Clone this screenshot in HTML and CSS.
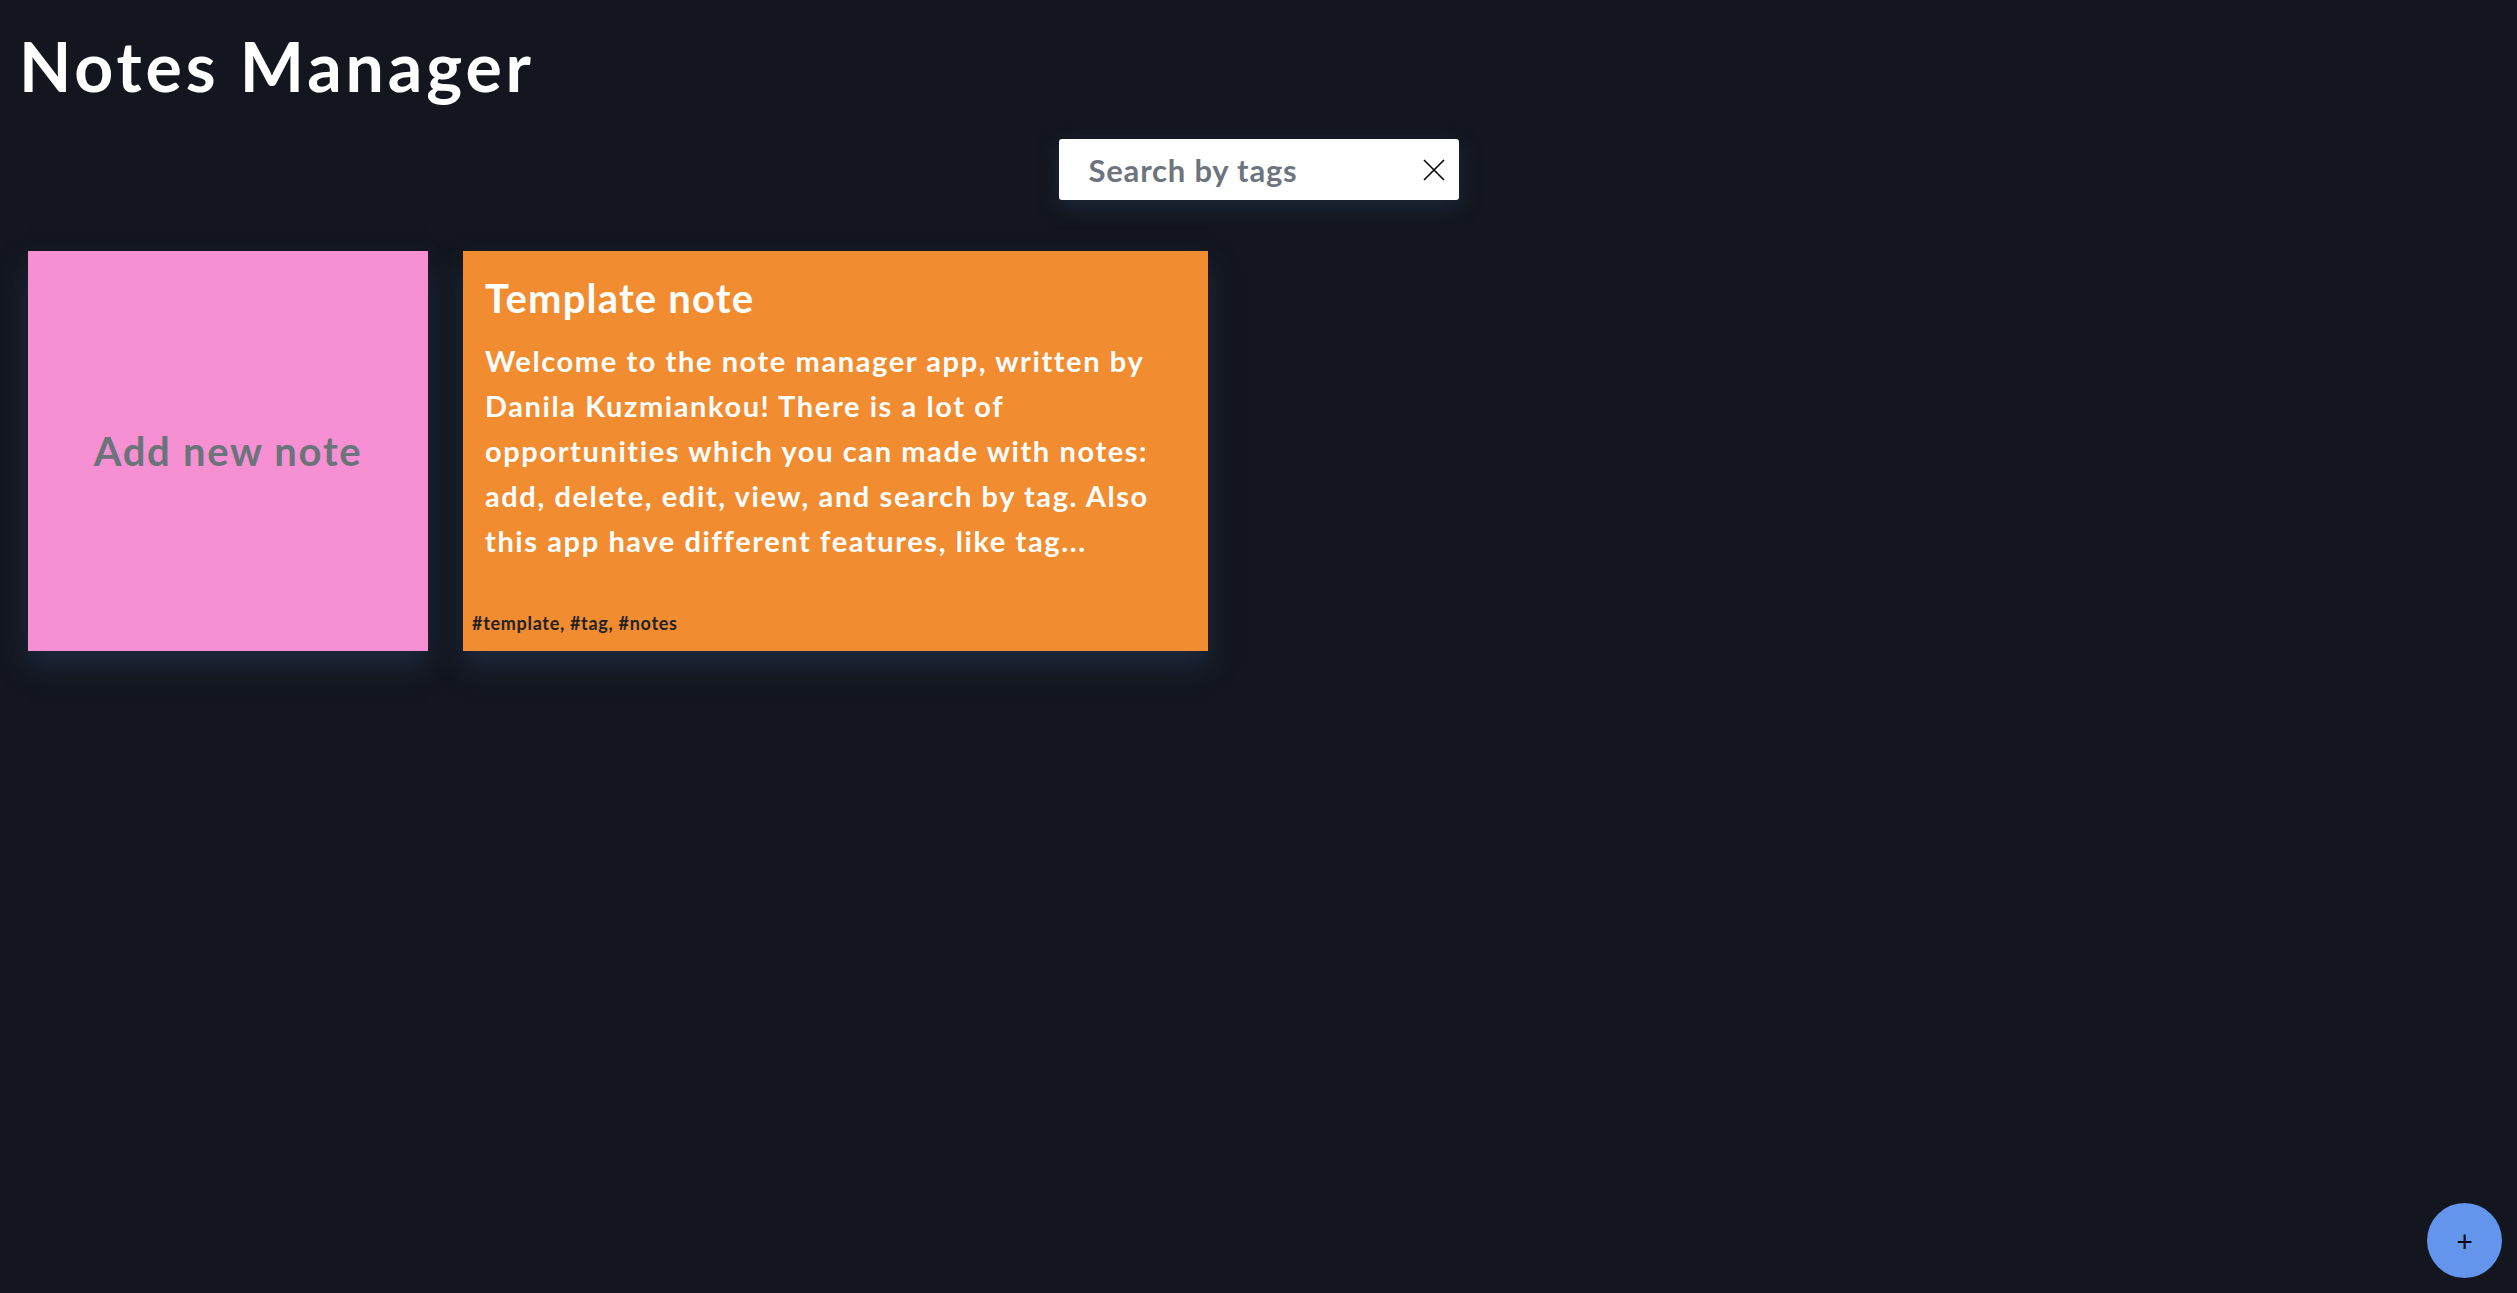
FILE: index.html
```html
<!DOCTYPE html>
<html lang="en">
<head>
<meta charset="utf-8">
<title>Notes Manager</title>
<link rel="stylesheet" href="styles.css">
</head>
<body>
<header class="header">
  <h1 class="title">Notes Manager</h1>
</header>
<div class="search-row">
  <div class="search">
    <input class="search-input" type="text" placeholder="Search by tags">
    <button class="search-clear" aria-label="Clear">
      <svg width="22" height="22" viewBox="0 0 22 22"><path d="M1 1 L21 21 M21 1 L1 21" stroke="#000" stroke-width="1.6" fill="none"/></svg>
    </button>
  </div>
</div>
<main class="notes">
  <div class="note note-add"><span class="add-text">Add new note</span></div>
  <div class="note note-item">
    <h2 class="note-title">Template note</h2>
    <p class="note-body">Welcome to the note manager app, written by Danila Kuzmiankou! There is a lot of opportunities which you can made with notes: add, delete, edit, view, and search by tag. Also this app have different features, like tag...</p>
    <div class="note-tags">#template, #tag, #notes</div>
  </div>
</main>
<button class="fab">+</button>
</body>
</html>
```
FILE: styles.css
```css
html, body {
  margin: 0;
  padding: 0;
}
body {
  background: #13161f;
  font-family: "Lato", "Noto Sans", sans-serif;
  color: #fff;
  min-height: 100vh;
}
.header {
  padding: 0 0 0 19px;
}
.title {
  margin: 0;
  padding-top: 25px;
  font-size: 68px;
  font-weight: 700;
  line-height: 82px;
  letter-spacing: 3.9px;
  color: #fff;
}
.search-row {
  display: flex;
  justify-content: center;
  margin-top: 32px;
}
.search {
  width: 400px;
  height: 61px;
  box-sizing: border-box;
  background: #fff;
  border-radius: 3px;
  display: flex;
  align-items: center;
  box-shadow: 0 6px 20px rgba(40, 60, 90, 0.5);
}
.search-input {
  flex: 1;
  border: none;
  outline: none;
  background: transparent;
  font-family: inherit;
  font-weight: 700;
  font-size: 31px;
  letter-spacing: 0.8px;
  padding: 0 0 0 30px;
  color: #6c757d;
  min-width: 0;
}
.search-input::placeholder {
  color: #6c757d;
}
.search-clear {
  border: none;
  background: transparent;
  padding: 0;
  margin-right: 14px;
  width: 22px;
  height: 22px;
  display: flex;
}
.notes {
  display: flex;
  gap: 35px;
  padding: 51px 0 0 28px;
  align-items: flex-start;
}
.note {
  height: 400px;
  box-sizing: border-box;
  box-shadow: 0 14px 26px rgba(40, 58, 88, 0.55);
}
.note-add {
  width: 400px;
  background: #f790d3;
  display: flex;
  align-items: center;
  justify-content: center;
}
.add-text {
  font-size: 40px;
  font-weight: 700;
  letter-spacing: 1.7px;
  color: #6b747b;
}
.note-item {
  width: 745px;
  background: #f28c30;
  display: flex;
  flex-direction: column;
  padding: 22px 33px 17px 9px;
}
.note-title {
  margin: 0 0 0 13px;
  font-size: 40px;
  font-weight: 700;
  line-height: 50px;
  letter-spacing: 1.2px;
}
.note-body {
  margin: 15px 0 0 13px;
  font-size: 29px;
  font-weight: 700;
  line-height: 45px;
  letter-spacing: 1.6px;
  flex: 1;
}
.note-tags {
  font-size: 18px;
  font-weight: 700;
  letter-spacing: 0.7px;
  color: #222;
}
.fab {
  position: fixed;
  right: 15px;
  bottom: 15px;
  width: 75px;
  height: 75px;
  border-radius: 50%;
  border: none;
  background: #6495ed;
  color: #000;
  font-size: 28px;
  line-height: 1;
  font-family: "Lato", sans-serif;
  padding: 0;
}
```
